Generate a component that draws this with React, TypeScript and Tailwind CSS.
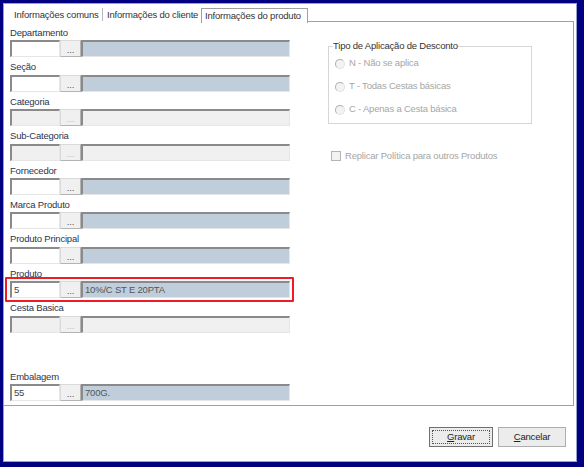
import React from 'react';

type Field = {
  label: string;
  code?: string;
  desc?: string;
  disabled?: boolean;
  highlight?: boolean;
};

const fields: (Field | null)[] = [
  { label: 'Departamento' },
  { label: 'Seção' },
  { label: 'Categoria', disabled: true },
  { label: 'Sub-Categoria', disabled: true },
  { label: 'Fornecedor' },
  { label: 'Marca Produto' },
  { label: 'Produto Principal' },
  { label: 'Produto', code: '5', desc: '10%/C ST E 20PTA', highlight: true },
  { label: 'Cesta Basica', disabled: true },
  null,
  { label: 'Embalagem', code: '55', desc: '700G.' },
];

const sunken =
  'border-t-2 border-l-2 border-b border-r border-t-[#8a8a8a] border-l-[#8a8a8a] border-b-[#e6e6e6] border-r-[#e6e6e6]';

function LookupRow({ field }: { field: Field }) {
  const { label, code, desc, disabled, highlight } = field;
  return (
    <div className="h-[34.4px] flex flex-col">
      <div className="h-[17.4px] pt-[4px] leading-[12px] text-[#2a3550]">{label}</div>
      <div className="relative flex h-[17px]">
        <div
          className={`w-[50px] h-full ${sunken} pl-[2px] leading-[13px] text-[#444] ${
            disabled ? 'bg-[#f0f0f0]' : 'bg-white'
          }`}
        >
          {code}
        </div>
        <div
          className={`w-[21px] h-full bg-[#f0f0f0] border border-[#dadada] border-b-[#b4b4b4] border-r-[#b4b4b4] flex items-end justify-center pb-[1px] leading-[10px] ${
            disabled ? 'text-[#b8b8b8]' : 'text-[#555]'
          }`}
        >
          ...
        </div>
        <div
          className={`w-[209px] h-full ${sunken} pl-[2px] leading-[13px] text-[#555] ${
            disabled ? 'bg-[#f0f0f0]' : 'bg-[#c0cedb]'
          }`}
        >
          {desc}
        </div>
        {highlight && (
          <div className="absolute left-[-5px] top-[-4px] w-[289px] h-[25px] border-2 border-[#ee1c24] rounded-[1px]" />
        )}
      </div>
    </div>
  );
}

function Radio({ label }: { label: string }) {
  return (
    <div className="h-[23px] flex items-center">
      <span className="w-[10px] h-[10px] rounded-full border border-[#b0b0b0] border-r-[#e2e2e2] border-b-[#e2e2e2] bg-[#f3f3f3]" />
      <span className="ml-[4px] text-[#a6a6a6]">{label}</span>
    </div>
  );
}

export default function App() {
  return (
    <div
      className="w-[584px] h-[467px] bg-[#000080] pl-[3px] pt-[3px] pr-[7px] pb-[5px] text-[9.5px] tracking-[-0.2px] whitespace-nowrap"
      style={{ fontFamily: '"Liberation Sans", Arial, sans-serif' }}
    >
      <div className="h-full border border-[#95a3cc] bg-white flex flex-col">
        {/* tab strip */}
        <div className="h-[18px] flex items-end pl-[6px] pr-[2px]">
          <div className="w-[92px] h-[15px] flex items-center pl-[4px] pt-[2px] text-[#333]">Informações comuns</div>
          <div className="h-[13px] w-px bg-[#b8b8b8] mb-[1px]" />
          <div className="w-[98px] h-[15px] flex items-center pl-[4px] pt-[2px] text-[#333]">Informações do cliente</div>
          <div className="h-[15px] w-[107px] border-l border-t border-r border-[#a0a0a0] bg-white flex items-center pl-[3px] pt-[1px] text-[#333] relative top-[1px]">
            Informações do produto
          </div>
          <div className="flex-1 border-b border-[#a0a0a0]" />
        </div>

        {/* tab page */}
        <div className="h-[384px] mr-[2px] border-r border-b border-[#a0a0a0] flex pl-[6px] pt-px">
          <div className="w-[280px]">
            {fields.map((f, i) =>
              f ? <LookupRow key={i} field={f} /> : <div key={i} className="h-[34.4px]" />
            )}
          </div>

          <div className="ml-[38px] pt-[17px]">
            <fieldset className="w-[204px] h-[84px] border border-[#d6d6d6] pl-[6px]">
              <legend className="ml-[-2px] leading-[12px] text-[#333]">Tipo de Aplicação de Desconto</legend>
              <Radio label="N - Não se aplica" />
              <Radio label="T - Todas Cestas básicas" />
              <Radio label="C - Apenas a Cesta básica" />
            </fieldset>

            <div className="mt-[26px] ml-[3px] h-[12px] flex items-center">
              <span className="w-[10px] h-[10px] border border-[#b4b4b4] bg-[#f3f3f3]" />
              <span className="ml-[4px] text-[#a6a6a6]">Replicar Política para outros Produtos</span>
            </div>
          </div>
        </div>

        {/* action buttons */}
        <div className="flex justify-end gap-[5px] pt-[21px] pr-[10px]">
          <button className="w-[64px] h-[20px] border border-[#6f6f6f] bg-[#ececec] p-[2px] text-[#222]">
            <span className="h-full flex items-center justify-center border border-dotted border-[#555]">
              <span className="underline">G</span>ravar
            </span>
          </button>
          <button className="w-[68px] h-[20px] border border-[#adadad] bg-[#ececec] text-[#222] flex items-center justify-center">
            <span className="underline">C</span>ancelar
          </button>
        </div>
      </div>
    </div>
  );
}
